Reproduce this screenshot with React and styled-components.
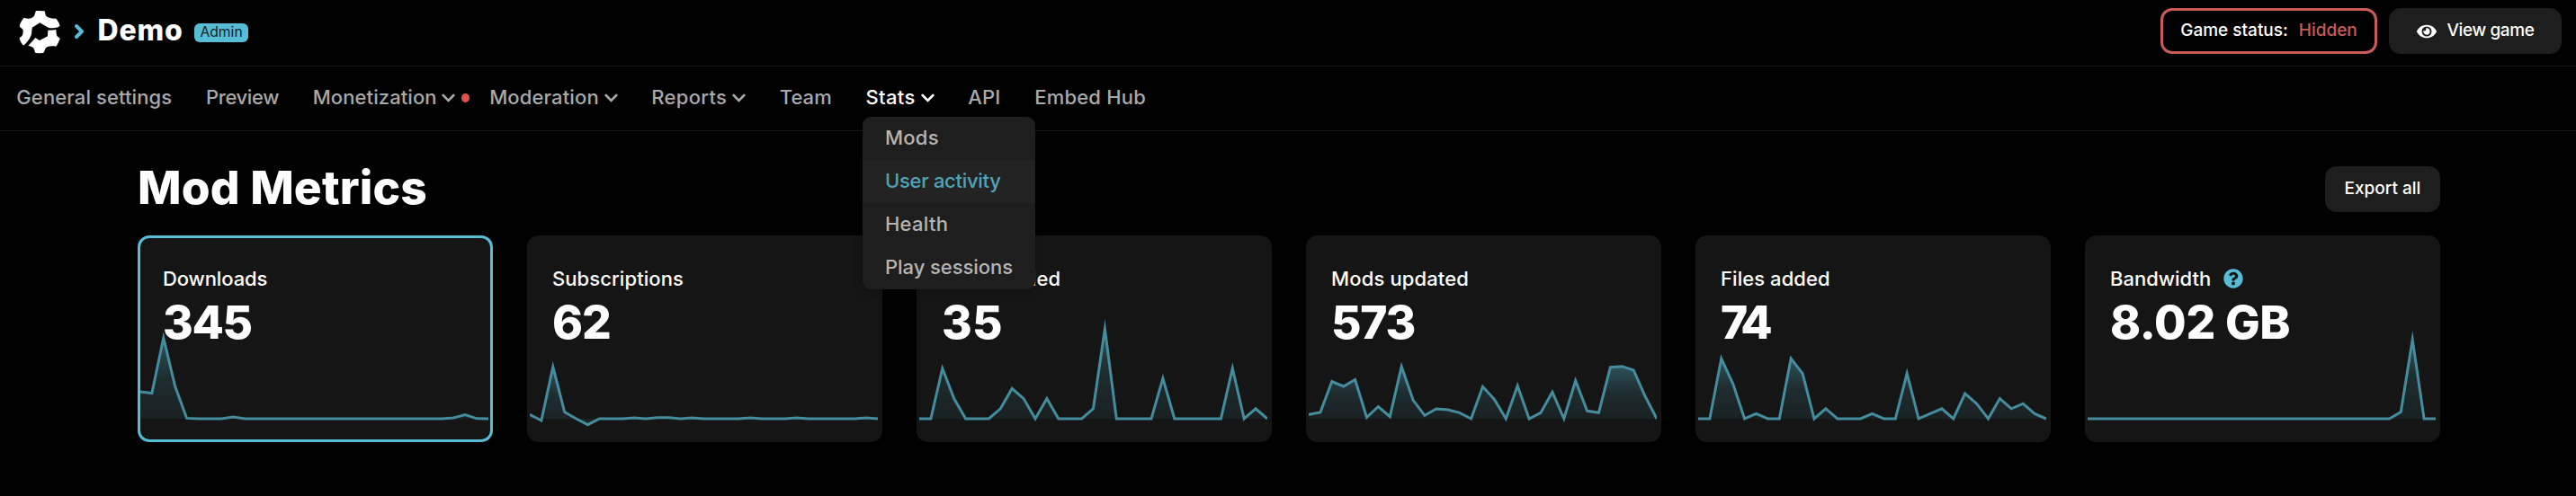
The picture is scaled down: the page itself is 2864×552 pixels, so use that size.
import React from "react";
import styled, { createGlobalStyle } from "styled-components";
import { FaEye, FaQuestionCircle } from "react-icons/fa";

const accent = "#57bcd6";

const GlobalStyle = createGlobalStyle`
  * { box-sizing: border-box; }
  body {
    margin: 0;
    background: #000;
    color: #fff;
    font-family: Inter, "Liberation Sans", sans-serif;
  }
`;

const Page = styled.div`
  min-height: 552px;
  background: #000;
`;

const Header = styled.header`
  display: flex;
  align-items: flex-start;
  justify-content: space-between;
  height: 74px;
  padding: 9px 16px 0 20px;
  border-bottom: 1px solid #191919;
`;

const Brand = styled.div`
  display: flex;
  align-items: center;
  height: 50px;
`;

const Logo = styled.svg`
  width: 48px;
  height: 49px;
  margin-top: 2px;
`;

const Crumb = styled.svg`
  width: 13px;
  height: 18px;
  margin: 2px 13.5px 0 14px;
`;

const GameName = styled.span`
  font-size: 32px;
  font-weight: 800;
  line-height: 40px;
  letter-spacing: 0.8px;
`;

const Badge = styled.span`
  display: flex;
  align-items: center;
  justify-content: center;
  width: 60px;
  height: 21px;
  margin: 4px 0 0 12.5px;
  border-radius: 6px;
  background: ${accent};
  color: #10262c;
  font-size: 15.7px;
  line-height: 20px;
`;

const Actions = styled.div`
  display: flex;
  gap: 13px;
`;

const Button = styled.button`
  display: flex;
  align-items: center;
  justify-content: center;
  gap: ${(p) => p.$gap || 0}px;
  width: ${(p) => p.$width}px;
  height: 51px;
  padding: 0 0 2px;
  border: ${(p) => (p.$outlined ? "3px solid #cb5a58" : "0")};
  border-radius: 13px;
  background: ${(p) => (p.$outlined ? "transparent" : "#1e1e1e")};
  color: #fff;
  font-family: inherit;
  font-size: 19px;
  font-weight: 500;
  line-height: 24px;
  letter-spacing: ${(p) => p.$spacing || 0}px;
  white-space: nowrap;
`;

const StatusValue = styled.span`
  color: #cb5a58;
`;

const EyeIcon = styled(FaEye)`
  width: 22px;
  height: 20px;
  margin-top: 2px;
`;

const Nav = styled.nav`
  display: flex;
  height: 72px;
  padding-bottom: 4px;
  border-bottom: 1px solid #191919;
  line-height: 28px;
`;

const NavItem = styled.div`
  position: relative;
  display: flex;
  align-items: center;
  gap: 5.8px;
  padding-left: ${(p) => p.$lead ?? 37.7}px;
  color: ${(p) => (p.$active ? "#fff" : "#a9a9a9")};
  font-size: 22px;
  font-weight: 500;
  letter-spacing: ${(p) => p.$spacing || 0}px;
  white-space: nowrap;
`;

const Caret = styled.svg`
  width: 15px;
  height: 10px;
  margin-top: 3px;
`;

const Dot = styled.span`
  position: absolute;
  right: -15.5px;
  top: 30px;
  width: 9px;
  height: 10px;
  border-radius: 50%;
  background: #e2524d;
`;

const Menu = styled.div`
  position: absolute;
  z-index: 2;
  top: 56px;
  left: 34.2px;
  width: 192px;
  overflow: hidden;
  border-radius: 9px;
  background: #1e1e1e;
  box-shadow: 0 3px 8px rgba(0, 0, 0, 0.25);
`;

const MenuItem = styled.div`
  display: flex;
  align-items: center;
  height: 48px;
  padding: 0 0 2px 25px;
  background: ${(p) => (p.$selected ? "#232323" : "transparent")};
  color: ${(p) => (p.$selected ? "#51a3b8" : "#b5b5b5")};
  letter-spacing: ${(p) => p.$spacing || 0}px;
`;

const Content = styled.main`
  width: 2560px;
  margin-left: 153px;
`;

const TitleRow = styled.div`
  display: flex;
  align-items: center;
  justify-content: space-between;
  height: 116px;
  padding-top: 13px;
`;

const Title = styled.h1`
  margin: 0 0 5px;
  font-size: 51.5px;
  font-weight: 800;
  line-height: 60px;
  letter-spacing: 0.14px;
`;

const Cards = styled.div`
  display: grid;
  grid-template-columns: repeat(6, 395px);
  gap: 38px;
`;

const Card = styled.section`
  display: grid;
  height: 230px;
  border: 3px solid ${(p) => (p.$active ? accent : "#151515")};
  border-radius: 13px;
  background: #151515;
`;

const CardText = styled.div`
  grid-area: 1 / 1;
  z-index: 1;
  padding: 29px 0 0 25px;
`;

const Label = styled.div`
  display: flex;
  align-items: center;
  gap: 14px;
  height: 31px;
  font-size: 22px;
  font-weight: 500;
  letter-spacing: ${(p) => p.$spacing || 0}px;
`;

const HelpIcon = styled(FaQuestionCircle)`
  width: 22px;
  height: 22px;
  color: ${accent};
`;

const Value = styled.div`
  margin-top: 3px;
  font-size: 51.5px;
  font-weight: 800;
  line-height: 60px;
  letter-spacing: ${(p) => p.$spacing || 0}px;
`;

const ChartArea = styled.svg`
  grid-area: 1 / 1;
  width: 387px;
  height: 224px;
`;

const STEP = 12.9;
const BASELINE = 201;

function Chart({ id, points }) {
  const line = points
    .map((h, i) => `${(i * STEP).toFixed(1)},${(BASELINE - h).toFixed(1)}`)
    .join(" ");
  return (
    <ChartArea viewBox="0 0 387 224">
      <defs>
        <linearGradient id={id} x1="0" y1="0" x2="0" y2="1">
          <stop offset="0" stopColor={accent} stopOpacity="0.36" />
          <stop offset="0.5" stopColor={accent} stopOpacity="0.14" />
          <stop offset="1" stopColor={accent} stopOpacity="0.07" />
        </linearGradient>
      </defs>
      <polygon points={`0,${BASELINE} ${line} 387,${BASELINE}`} fill={`url(#${id})`} />
      <polyline
        points={line}
        fill="none"
        stroke="#448c9e"
        strokeWidth="3"
        strokeMiterlimit="10"
      />
    </ChartArea>
  );
}

function Chevron() {
  return (
    <Caret viewBox="0 0 15 10">
      <path
        d="M1.7 2L7.5 7.8L13.3 2"
        fill="none"
        stroke="currentColor"
        strokeWidth="2.6"
        strokeLinecap="round"
      />
    </Caret>
  );
}

const flat = (n) => Array(n).fill(0);

const metrics = [
  {
    id: "downloads", label: "Downloads", value: "345", active: true, labelSpacing: -0.1, valueSpacing: -1.43,
    points: [30, 28.5, 90, 36, 0.6, 0, 0, 0, 2, ...flat(18), 1, 4.5, 0.2, 0],
  },
  {
    id: "subscriptions", label: "Subscriptions", value: "62", labelSpacing: 0.08, valueSpacing: -1.04,
    points: [4.7, -2, 57.7, 7.5, 0, -6.7, 0, 0, 0, 1, 0, 1.2, 1.2, 0, 1, 0, 0, 0, 0, 1, 0, 0, 0, 1, 0, 0, 0, 0, 0, 1, 0],
  },
  {
    id: "mods-added", label: "Mods added", value: "35", labelSpacing: 0.14, valueSpacing: 0.3,
    points: [0, 0, 56, 22.4, 0, 0, 0, 11.2, 33.6, 22.4, 0, 22.4, 0, 0, 0, 11.2, 100, 0, 0, 0, 0, 44.8, 0, 0, 0, 0, 0, 56, 0, 11.2, 0],
  },
  {
    id: "mods-updated", label: "Mods updated", value: "573", labelSpacing: 0.14, valueSpacing: -1.23,
    points: [4.7, 7, 41.5, 36, 43.5, 1.5, 13.5, 2.3, 58, 20.7, 3.7, 11, 10, 6.7, 0, 35.7, 21.5, 0, 36.7, 0, 6.7, 29.7, 0, 42.3, 8.7, 6.7, 57.3, 58.3, 54, 25, 0],
  },
  {
    id: "files-added", label: "Files added", value: "74", labelSpacing: 0.07, valueSpacing: -4.97,
    points: [0, 0, 67, 39, 0, 5.6, 0, 0, 67, 50.4, 0, 11.2, 0, 0, 0, 5.6, 0, 0, 50.4, 0, 5.6, 11.2, 0, 28, 16.8, 0, 22.4, 11.2, 16.8, 5.6, 0],
  },
  {
    id: "bandwidth", label: "Bandwidth", value: "8.02 GB", help: true, valueSpacing: -0.32,
    points: [...flat(27), 7.5, 88, 0, 0],
  },
];

export default function App() {
  return (
    <Page>
      <GlobalStyle />
      <Header>
        <Brand>
          <Logo viewBox="60 30 144 147">
            <path
              fill="#fff"
              d="M121 33Q134 32 148 34Q151 36 151 44Q153 52 160 55Q170 59 180 59Q185 57 188 60Q196 70 200 83Q196 88 183 90Q170 92 161 89L133 73L107 89L105 112Q98 132 82 146Q79 149 76 147Q68 137 65 126Q64 122 71 119Q78 112 77 98Q76 93 67 88Q64 85 66 80Q70 68 79 57Q81 55 85 58Q94 61 106 57Q116 51 117 42Q118 35 121 33Z"
            />
            <path
              fill="#fff"
              d="M160 98Q175 98 187 96Q187 109 190 117Q194 121 199 124Q201 126 198 131Q194 142 188 151Q186 153 181 151Q169 149 157 154Q149 159 148 168Q147 173 143 174Q131 175 119 174Q116 173 115 164Q110 152 98 151L94 149Q108 136 118 123L132 132L159 118Z"
            />
          </Logo>
          <Crumb viewBox="0 0 13 18">
            <path
              d="M3 3L9 9L3 15"
              fill="none"
              stroke={accent}
              strokeWidth="4"
              strokeLinecap="round"
              strokeLinejoin="round"
            />
          </Crumb>
          <GameName>Demo</GameName>
          <Badge>Admin</Badge>
        </Brand>
        <Actions>
          <Button $outlined $width={241} $gap={12}>
            Game status: <StatusValue>Hidden</StatusValue>
          </Button>
          <Button $width={192} $gap={12} $spacing={-0.4}>
            <EyeIcon />
            View game
          </Button>
        </Actions>
      </Header>

      <Nav>
        <NavItem $lead={18.3} $spacing={0.11}>General settings</NavItem>
        <NavItem $spacing={-0.385}>Preview</NavItem>
        <NavItem $spacing={0.09}>Monetization<Chevron /><Dot /></NavItem>
        <NavItem $spacing={0.13}>Moderation<Chevron /></NavItem>
        <NavItem $spacing={0.3}>Reports<Chevron /></NavItem>
        <NavItem $spacing={0.07}>Team</NavItem>
        <NavItem $active $spacing={0.36}>
          Stats<Chevron />
          <Menu>
            <MenuItem $spacing={0.25}>Mods</MenuItem>
            <MenuItem $selected $spacing={-0.3}>User activity</MenuItem>
            <MenuItem $spacing={0.26}>Health</MenuItem>
            <MenuItem $spacing={-0.05}>Play sessions</MenuItem>
          </Menu>
        </NavItem>
        <NavItem $spacing={0.2}>API</NavItem>
        <NavItem $spacing={0.2}>Embed Hub</NavItem>
      </Nav>

      <Content>
        <TitleRow>
          <Title>Mod Metrics</Title>
          <Button $width={128}>Export all</Button>
        </TitleRow>
        <Cards>
          {metrics.map((m) => (
            <Card key={m.id} $active={m.active}>
              <Chart id={m.id} points={m.points} />
              <CardText>
                <Label $spacing={m.labelSpacing}>
                  {m.label}
                  {m.help && <HelpIcon />}
                </Label>
                <Value $spacing={m.valueSpacing}>{m.value}</Value>
              </CardText>
            </Card>
          ))}
        </Cards>
      </Content>
    </Page>
  );
}
